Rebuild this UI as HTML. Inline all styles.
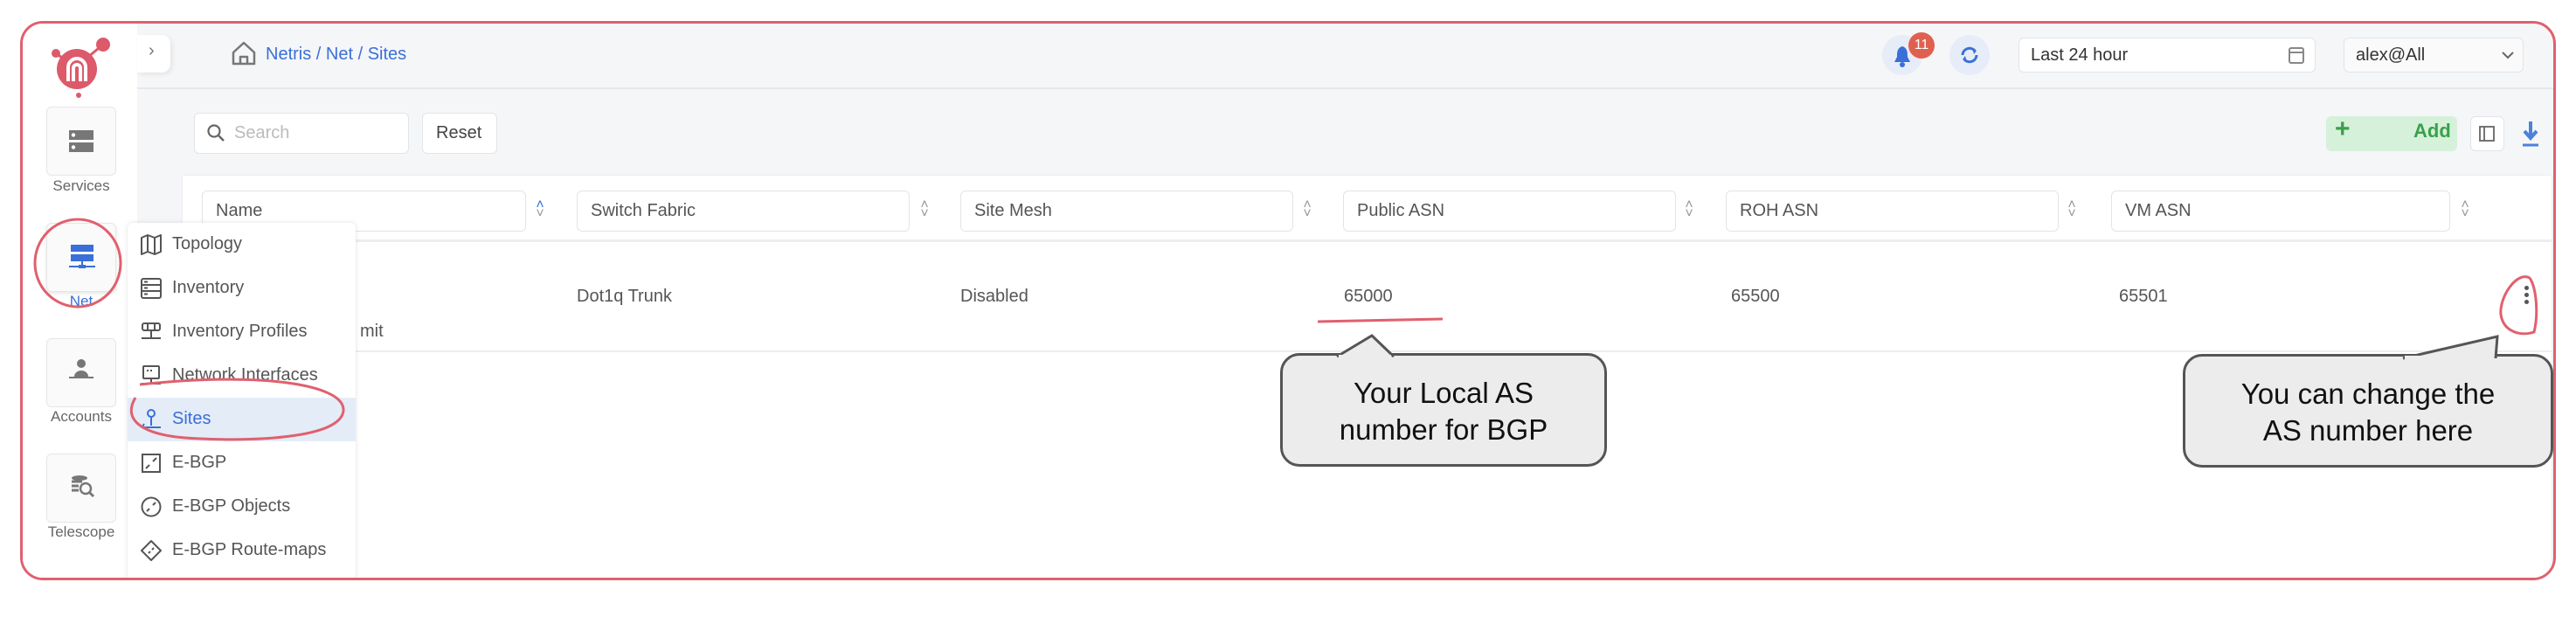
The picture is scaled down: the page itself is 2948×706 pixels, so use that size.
<!DOCTYPE html>
<html><head><meta charset="utf-8"><style>
*{box-sizing:border-box;margin:0;padding:0}
body{width:2948px;height:706px;background:#fff;font-family:"Liberation Sans",sans-serif;position:relative;overflow:hidden;color:#444}
.a{position:absolute}
.frame{left:23px;top:24px;width:2902px;height:640px;border:3px solid #e0606e;border-radius:26px;overflow:hidden;background:#f5f6f8}
.side{left:0;top:0;width:131px;height:100%;background:#fff}
.nbox{width:80px;height:79px;border:1.5px solid #e6e6e6;border-radius:6px;background:#fafafa}
.nlab{width:130px;text-align:center;font-size:17px;color:#666}
.inp{background:#fff;border:1.5px solid #e2e4e8;border-radius:6px}
.t{font-size:20px;color:#555;white-space:nowrap}
.srt{font-size:16px;color:#999;line-height:10px;text-align:center;width:14px}
.mi{left:0;width:261px;height:50px}
.mi span{position:absolute;left:51px;top:13px;font-size:20px;color:#555}
.mi svg{position:absolute;left:14px;top:12px}
.call{background:#ececec;border:3px solid #555;border-radius:22px;text-align:center;font-size:33px;color:#111;line-height:42px}
</style></head><body>
<div class="a frame">
  <div class="a side"></div>
  <!-- logo -->
  <svg class="a" style="left:30px;top:8px" width="100" height="95" viewBox="0 0 100 95">
    <circle cx="32" cy="44" r="23" fill="#dc5a6a"/>
    <circle cx="8" cy="26" r="5" fill="#dc5a6a"/><line x1="8" y1="26" x2="22" y2="36" stroke="#dc5a6a" stroke-width="3"/>
    <circle cx="62" cy="16" r="8" fill="#dc5a6a"/><line x1="62" y1="16" x2="45" y2="30" stroke="#dc5a6a" stroke-width="3"/>
    <circle cx="34" cy="74" r="3" fill="#dc5a6a"/>
    <path d="M22 58 V42 a10 10 0 0 1 20 0 V58 M28 58 V43 a4 4 0 0 1 8 0 V58" fill="none" stroke="#fff" stroke-width="4"/>
  </svg>
  <!-- toggle -->
  <div class="a" style="left:131px;top:13px;width:38px;height:43px;background:#fff;border-radius:0 10px 10px 0;box-shadow:2px 2px 6px rgba(0,0,0,.08)"></div>
  <div class="a" style="left:144px;top:20px;font-size:20px;color:#777">›</div>
  <!-- topbar -->
  <div class="a" style="left:131px;top:73px;width:2780px;height:2px;background:#e6e7ea"></div>
  <svg class="a" style="left:238px;top:19px" width="30" height="30" viewBox="0 0 30 30"><path d="M3 14 L15 3 L27 14 V27 H3 Z M11 27 V19 H19 V27" fill="none" stroke="#777" stroke-width="2.5" stroke-linejoin="round"/></svg>
  <div class="a" style="left:278px;top:24px;font-size:20px;color:#3a6fd8">Netris / Net / Sites</div>
  <div class="a" style="left:2128px;top:13px;width:46px;height:46px;border-radius:50%;background:#e6edf8"></div>
  <svg class="a" style="left:2140px;top:24px" width="22" height="26" viewBox="0 0 22 26"><path d="M11 2 C5 4 5 9 5 14 L2 20 H20 L17 14 C17 9 17 4 11 2Z" fill="#3a6fd8"/><circle cx="11" cy="23" r="3" fill="#3a6fd8"/></svg>
  <div class="a" style="left:2158px;top:10px;width:30px;height:30px;border-radius:50%;background:#e06050;color:#fff;font-size:16px;text-align:center;line-height:30px">11</div>
  <div class="a" style="left:2205px;top:13px;width:46px;height:46px;border-radius:50%;background:#e6edf8"></div>
  <svg class="a" style="left:2215px;top:23px" width="26" height="26" viewBox="0 0 26 26"><path d="M5 13 a8 8 0 0 1 14 -5 M21 13 a8 8 0 0 1 -14 5" fill="none" stroke="#3a6fd8" stroke-width="3"/><path d="M16 5 L21 8 L18 12Z M10 21 L5 18 L8 14Z" fill="#3a6fd8"/></svg>
  <div class="a inp" style="left:2284px;top:16px;width:340px;height:40px"></div>
  <div class="a t" style="left:2298px;top:25px;color:#333">Last 24 hour</div>
  <svg class="a" style="left:2592px;top:25px" width="20" height="22" viewBox="0 0 20 22"><rect x="2" y="3" width="16" height="17" rx="2" fill="none" stroke="#888" stroke-width="2"/><line x1="2" y1="8" x2="18" y2="8" stroke="#888" stroke-width="2"/></svg>
  <div class="a inp" style="left:2656px;top:16px;width:206px;height:40px;background:#fafafa"></div>
  <div class="a t" style="left:2670px;top:25px;color:#333">alex@All</div>
  <svg class="a" style="left:2836px;top:30px" width="16" height="12" viewBox="0 0 16 12"><path d="M2 3 L8 9 L14 3" fill="none" stroke="#666" stroke-width="2"/></svg>
  <!-- search row -->
  <div class="a inp" style="left:196px;top:102px;width:246px;height:47px"></div>
  <svg class="a" style="left:210px;top:114px" width="22" height="22" viewBox="0 0 22 22"><circle cx="9" cy="9" r="6.5" fill="none" stroke="#666" stroke-width="2.2"/><line x1="14" y1="14" x2="20" y2="20" stroke="#666" stroke-width="2.4"/></svg>
  <div class="a t" style="left:242px;top:114px;color:#bbb">Search</div>
  <div class="a inp" style="left:457px;top:102px;width:86px;height:47px"></div>
  <div class="a t" style="left:473px;top:114px;color:#444">Reset</div>
  <div class="a" style="left:2636px;top:106px;width:150px;height:40px;background:#d6f1da;border-radius:6px"></div>
  <div class="a" style="left:2646px;top:104px;font-size:30px;color:#3aa04a;font-weight:bold">+</div>
  <div class="a" style="left:2736px;top:110px;font-size:22px;color:#3aa04a;font-weight:bold">Add</div>
  <div class="a inp" style="left:2801px;top:106px;width:39px;height:40px"></div>
  <svg class="a" style="left:2810px;top:116px" width="20" height="20" viewBox="0 0 20 20"><rect x="2" y="2" width="16" height="16" fill="none" stroke="#666" stroke-width="1.8"/><line x1="7" y1="2" x2="7" y2="18" stroke="#666" stroke-width="1.8"/></svg>
  <svg class="a" style="left:2858px;top:110px" width="24" height="32" viewBox="0 0 24 32"><path d="M12 2 V20 M5 13 L12 21 L19 13" fill="none" stroke="#4a82dc" stroke-width="4"/><line x1="3" y1="29" x2="21" y2="29" stroke="#4a82dc" stroke-width="3"/></svg>
  <!-- table card -->
  <div class="a" style="left:183px;top:174px;width:2711px;height:480px;background:#fff;box-shadow:0 0 3px rgba(0,0,0,.08)"></div>
  <div class="a" style="left:183px;top:247px;width:2711px;height:3px;background:#eceef0"></div>
  <div class="a" style="left:183px;top:374px;width:2711px;height:2px;background:#eceef0"></div>

  <div class="a inp" style="left:205px;top:191px;width:371px;height:47px"></div><div class="a t" style="left:221px;top:203px">Name</div><div class="a srt" style="left:585px;top:203px;color:#3a6fd8">˄<br><span style="color:#999">˅</span></div>
  <div class="a inp" style="left:634px;top:191px;width:381px;height:47px"></div><div class="a t" style="left:650px;top:203px">Switch Fabric</div><div class="a srt" style="left:1025px;top:203px">˄<br>˅</div>
  <div class="a inp" style="left:1073px;top:191px;width:381px;height:47px"></div><div class="a t" style="left:1089px;top:203px">Site Mesh</div><div class="a srt" style="left:1463px;top:203px">˄<br>˅</div>
  <div class="a inp" style="left:1511px;top:191px;width:381px;height:47px"></div><div class="a t" style="left:1527px;top:203px">Public ASN</div><div class="a srt" style="left:1900px;top:203px">˄<br>˅</div>
  <div class="a inp" style="left:1949px;top:191px;width:381px;height:47px"></div><div class="a t" style="left:1965px;top:203px">ROH ASN</div><div class="a srt" style="left:2338px;top:203px">˄<br>˅</div>
  <div class="a inp" style="left:2390px;top:191px;width:388px;height:47px"></div><div class="a t" style="left:2406px;top:203px">VM ASN</div><div class="a srt" style="left:2788px;top:203px">˄<br>˅</div>

  <div class="a t" style="left:386px;top:341px">mit</div>
  <div class="a t" style="left:634px;top:301px">Dot1q Trunk</div>
  <div class="a t" style="left:1073px;top:301px">Disabled</div>
  <div class="a t" style="left:1512px;top:301px">65000</div>
  <div class="a t" style="left:1955px;top:301px">65500</div>
  <div class="a t" style="left:2399px;top:301px">65501</div>
  <div class="a" style="left:2863px;top:300px;width:5px">
    <div style="width:5px;height:5px;border-radius:50%;background:#555;margin-bottom:3px"></div>
    <div style="width:5px;height:5px;border-radius:50%;background:#555;margin-bottom:3px"></div>
    <div style="width:5px;height:5px;border-radius:50%;background:#555"></div>
  </div>

  <!-- sidebar nav -->
  <div class="a nbox" style="left:27px;top:95px"></div>
  <svg class="a" style="left:52px;top:120px" width="30" height="30" viewBox="0 0 30 30"><rect x="1" y="2" width="28" height="11" fill="#777"/><rect x="1" y="16" width="28" height="11" fill="#777"/><circle cx="6" cy="7.5" r="2.2" fill="#fff"/><circle cx="6" cy="21.5" r="2.2" fill="#fff"/></svg>
  <div class="a nlab" style="left:2px;top:176px">Services</div>
  <div class="a nbox" style="left:27px;top:228px;box-shadow:0 2px 4px rgba(0,0,0,.1)"></div>
  <svg class="a" style="left:52px;top:252px" width="32" height="32" viewBox="0 0 32 32"><rect x="3" y="1" width="26" height="8" fill="#3a6fd8"/><rect x="3" y="12" width="26" height="8" fill="#3a6fd8"/><rect x="15" y="20" width="2" height="6" fill="#3a6fd8"/><rect x="1" y="25" width="30" height="2" fill="#3a6fd8"/><rect x="12" y="24" width="8" height="4" fill="#3a6fd8"/></svg>
  <div class="a nlab" style="left:2px;top:308px;color:#3a6fd8">Net</div>
  <div class="a nbox" style="left:27px;top:360px"></div>
  <svg class="a" style="left:52px;top:382px" width="30" height="32" viewBox="0 0 30 32"><circle cx="15" cy="7" r="5" fill="#777"/><path d="M7 22 a8 7 0 0 1 16 0Z" fill="#777"/><rect x="1" y="22" width="28" height="2" fill="#777"/></svg>
  <div class="a nlab" style="left:2px;top:440px">Accounts</div>
  <div class="a nbox" style="left:27px;top:492px"></div>
  <svg class="a" style="left:54px;top:515px" width="30" height="30" viewBox="0 0 30 30"><ellipse cx="11" cy="5" rx="9" ry="3" fill="#777"/><path d="M2 9 H14 M2 14 H10 M2 19 H10" stroke="#777" stroke-width="3"/><circle cx="18" cy="17" r="6" fill="none" stroke="#777" stroke-width="2.5"/><line x1="22" y1="21" x2="27" y2="26" stroke="#777" stroke-width="3"/></svg>
  <div class="a nlab" style="left:2px;top:572px">Telescope</div>

  <!-- dropdown menu -->
  <div class="a" style="left:120px;top:228px;width:261px;height:420px;background:#fff;border-radius:6px 6px 0 0;box-shadow:0 0 6px rgba(0,0,0,.12)">
    <div class="a mi" style="top:0"><svg width="26" height="26" viewBox="0 0 26 26"><path d="M2 5 L9 2 L17 5 L24 2 V21 L17 24 L9 21 L2 24Z M9 2 V21 M17 5 V24" fill="none" stroke="#555" stroke-width="2" stroke-linejoin="round"/></svg><span>Topology</span></div>
    <div class="a mi" style="top:50px"><svg width="26" height="26" viewBox="0 0 26 26"><rect x="2" y="2" width="22" height="22" rx="2" fill="none" stroke="#555" stroke-width="2"/><path d="M2 9 H24 M2 16 H24 M5 5.5 H9 M5 12.5 H9 M5 19.5 H9" stroke="#555" stroke-width="2"/></svg><span>Inventory</span></div>
    <div class="a mi" style="top:100px"><svg width="26" height="26" viewBox="0 0 26 26"><rect x="3" y="3" width="20" height="8" rx="2" fill="none" stroke="#555" stroke-width="2"/><path d="M13 11 V19 M2 20 H24 M9 4 V10 M17 4 V10" stroke="#555" stroke-width="2"/></svg><span>Inventory Profiles</span></div>
    <div class="a mi" style="top:150px"><svg width="26" height="26" viewBox="0 0 26 26"><rect x="4" y="2" width="18" height="14" rx="1" fill="none" stroke="#555" stroke-width="2"/><path d="M13 16 V21 M2 22 H24 M8 7 H10 M12 7 H14" stroke="#555" stroke-width="2"/></svg><span>Network Interfaces</span></div>
    <div class="a mi" style="top:200px;background:#e4ecf8"><svg width="26" height="26" viewBox="0 0 26 26"><circle cx="13" cy="6" r="4" fill="none" stroke="#3a6fd8" stroke-width="2"/><path d="M13 10 V20 M2 22 H24 M5 18 Q2 22 6 22" stroke="#3a6fd8" stroke-width="2" fill="none"/></svg><span style="color:#3a6fd8">Sites</span></div>
    <div class="a mi" style="top:250px"><svg width="26" height="26" viewBox="0 0 26 26"><rect x="3" y="3" width="20" height="20" fill="none" stroke="#555" stroke-width="2"/><path d="M7 19 L11 15 M15 11 L19 7" stroke="#555" stroke-width="2"/></svg><span>E-BGP</span></div>
    <div class="a mi" style="top:300px"><svg width="26" height="26" viewBox="0 0 26 26"><circle cx="13" cy="13" r="10.5" fill="none" stroke="#555" stroke-width="2"/><path d="M8 18 L11 15 M15 11 L18 8" stroke="#555" stroke-width="2"/></svg><span>E-BGP Objects</span></div>
    <div class="a mi" style="top:350px"><svg width="26" height="26" viewBox="0 0 26 26"><path d="M13 2 L24 13 L13 24 L2 13Z" fill="none" stroke="#555" stroke-width="2" stroke-linejoin="round"/><path d="M10 16 L12 14 M14 12 L16 10" stroke="#555" stroke-width="2"/></svg><span>E-BGP Route-maps</span></div>
  </div>
</div>

<!-- annotations -->
<svg class="a" style="left:0;top:0" width="2948" height="706" viewBox="0 0 2948 706">
  <ellipse cx="89" cy="301" rx="49" ry="50" fill="none" stroke="#e0606e" stroke-width="3"/>
  <path d="M160 440 C300 425 395 440 393 470 C390 500 300 505 230 502 C160 500 140 480 155 455" fill="none" stroke="#e0606e" stroke-width="3"/>
  <path d="M1508 368 L1651 365" stroke="#e0606e" stroke-width="3"/>
  <path d="M2895 318 C2880 310 2860 340 2862 360 C2865 380 2885 385 2900 380 C2905 360 2903 330 2895 318" fill="none" stroke="#e0606e" stroke-width="3"/>
</svg>
<div class="a call" style="left:1465px;top:404px;width:374px;height:130px;padding-top:22px">Your Local AS<br>number for BGP</div>
<svg class="a" style="left:1520px;top:380px" width="110" height="30" viewBox="0 0 110 30"><path d="M10 28 L50 4 L75 28" fill="#ececec" stroke="#555" stroke-width="3"/><rect x="12" y="26" width="60" height="6" fill="#ececec"/></svg>
<div class="a call" style="left:2498px;top:405px;width:424px;height:130px;padding-top:22px">You can change the<br>AS number here</div>
<svg class="a" style="left:2740px;top:380px" width="130" height="32" viewBox="0 0 130 32"><path d="M10 30 L118 5 L116 30" fill="#ececec" stroke="#555" stroke-width="3"/><rect x="12" y="27" width="102" height="6" fill="#ececec"/></svg>
</body></html>
